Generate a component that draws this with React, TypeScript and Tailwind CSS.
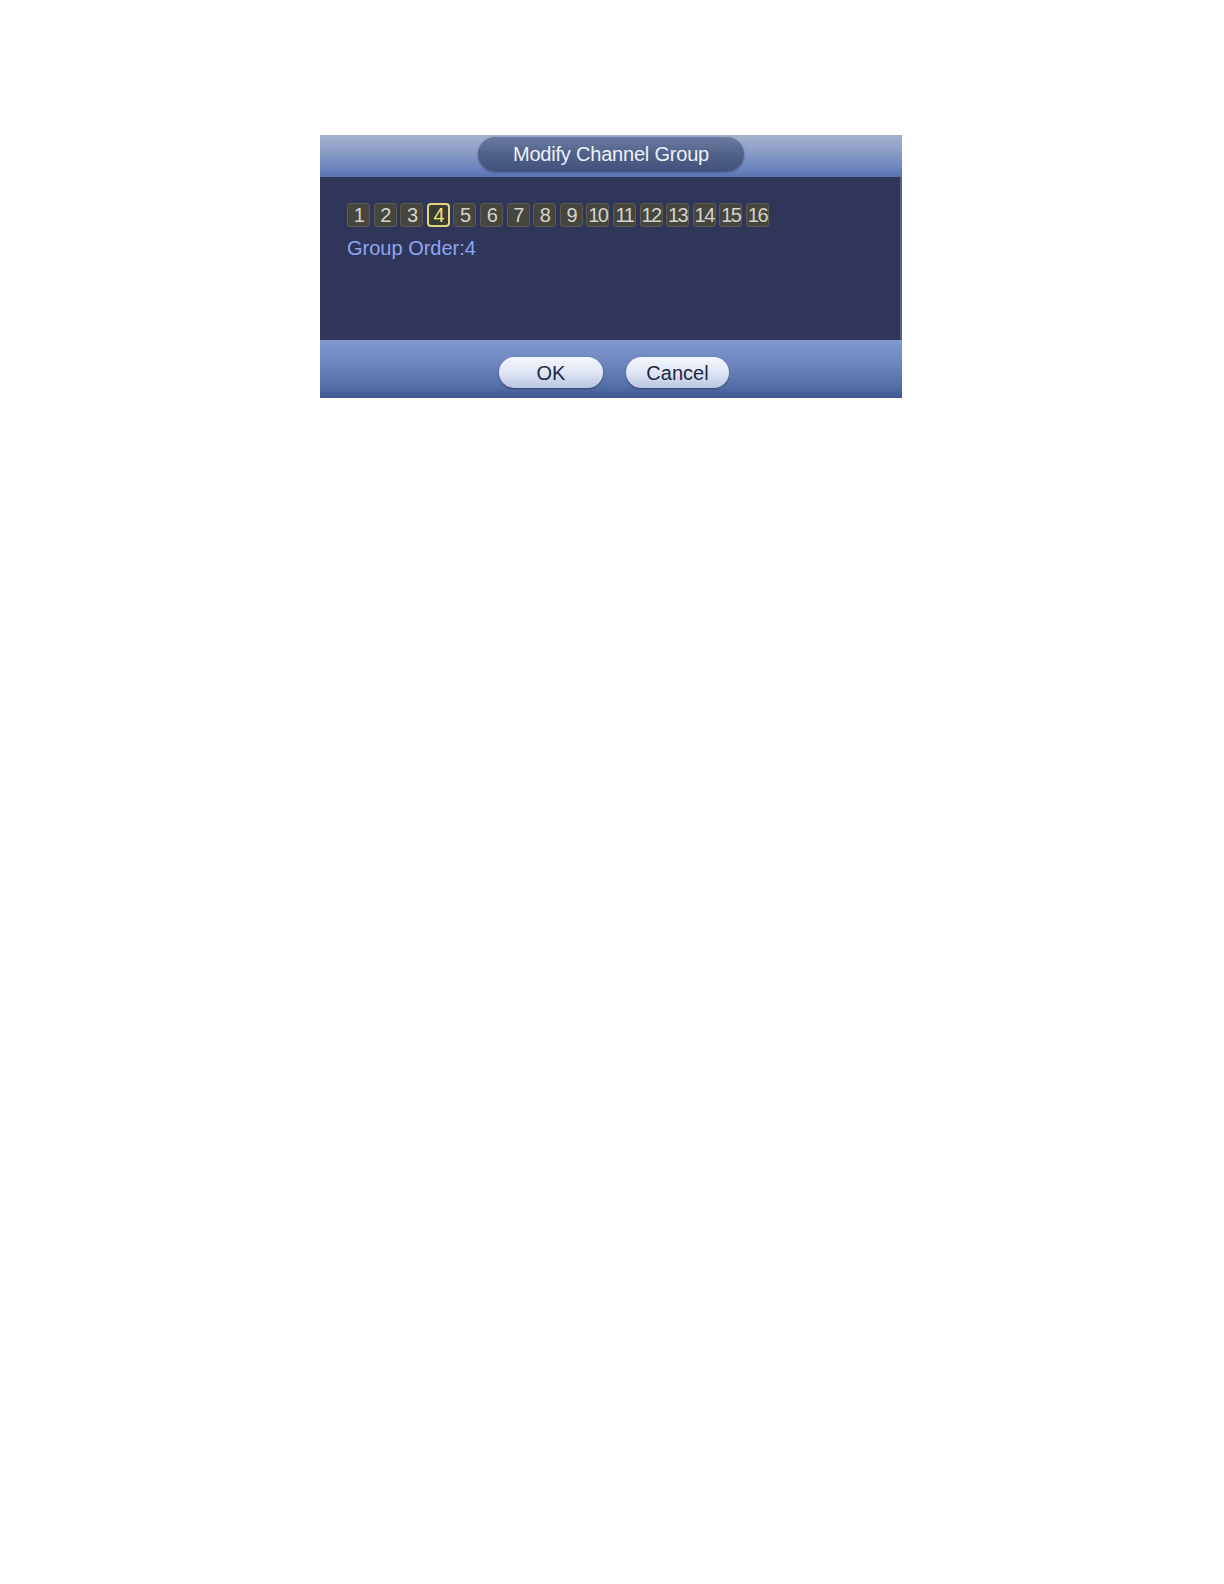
import * as React from "react";

const channels = Array.from({ length: 16 }, (_, i) => i + 1);

export default function App() {
  const [selected, setSelected] = React.useState<number>(4);

  return (
    <div className="min-h-[1584px] w-full bg-white pt-[135px] pl-[320px] font-['Liberation_Sans',Arial,sans-serif]">
      <div className="w-[582px] flex flex-col">
        {/* HEADER */}
        <div className="h-[42px] flex items-start justify-center pt-[2px] bg-[linear-gradient(to_bottom,#a6b2cc_0%,#8fa0c8_35%,#6f88c0_75%,#5a72b0_100%)]">
          <div className="h-[34px] w-[266px] rounded-full flex items-center justify-center text-[20px] text-[#eef2fa] tracking-[-0.2px] bg-[linear-gradient(to_bottom,#6b7aa0_0%,#4f6088_55%,#42527c_100%)] shadow-[0_1px_2px_rgba(30,40,70,0.6)]">
            Modify Channel Group
          </div>
        </div>

        {/* BODY */}
        <div className="h-[163px] bg-[#2f3659] border-r-2 border-[#5a6078] pt-[26px] pl-[27px]">
          <div className="flex gap-[3.6px]">
            {channels.map((n) =>
              n === selected ? (
                <button
                  key={n}
                  onClick={() => setSelected(n)}
                  className="w-[23px] h-[24px] rounded-[4px] border-2 border-[#e4d47c] bg-[#3b3b35] flex items-center justify-center text-[20px] leading-none text-[#f3e46c] tracking-[-1.5px]"
                >
                  {n}
                </button>
              ) : (
                <button
                  key={n}
                  onClick={() => setSelected(n)}
                  className="w-[23px] h-[24px] rounded-[3px] border border-[#5b5b53] bg-[#46463f] flex items-center justify-center text-[20px] leading-none text-[#d4d4cc] tracking-[-1.5px]"
                >
                  {n}
                </button>
              )
            )}
          </div>
          <div className="mt-[9px] text-[20px] leading-[24px] text-[#8ea6f2]">
            Group Order:{selected}
          </div>
        </div>

        {/* FOOTER */}
        <div className="h-[58px] flex justify-center gap-[23px] pt-[17px] pl-[6px] bg-[linear-gradient(to_bottom,#8199cf_0%,#6d86c0_40%,#546ea8_80%,#3f5792_100%)]">
          <button className="w-[104px] h-[31px] rounded-full text-[20px] text-[#1e2840] bg-[linear-gradient(to_bottom,#f4f7fd_0%,#dfe6f4_50%,#b9c6e2_100%)] shadow-[0_1px_2px_rgba(20,30,60,0.5)]">
            OK
          </button>
          <button className="w-[103px] h-[31px] rounded-full text-[20px] text-[#1e2840] bg-[linear-gradient(to_bottom,#f4f7fd_0%,#dfe6f4_50%,#b9c6e2_100%)] shadow-[0_1px_2px_rgba(20,30,60,0.5)]">
            Cancel
          </button>
        </div>
      </div>
    </div>
  );
}
